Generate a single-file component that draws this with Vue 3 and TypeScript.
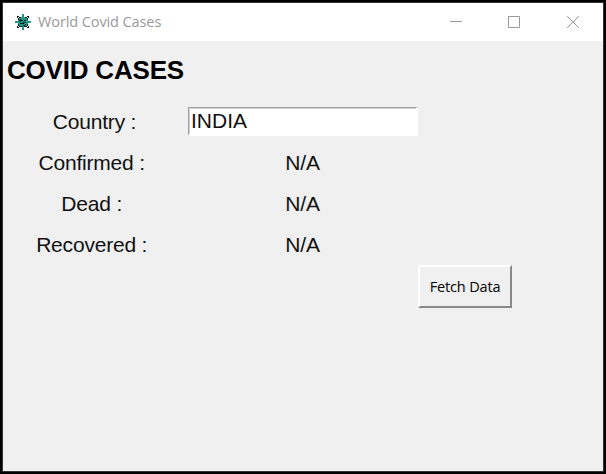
<script setup lang="ts">
import { ref } from 'vue'

const country = ref('INDIA')
const rows = [
  { label: 'Confirmed :', value: 'N/A' },
  { label: 'Dead :', value: 'N/A' },
  { label: 'Recovered :', value: 'N/A' },
]
</script>

<template>
  <div class="window">
    <header class="titlebar">
      <svg class="app-icon" width="16" height="16" viewBox="0 0 16 16" shape-rendering="crispEdges">
        <path fill="#20998b" d="M7 0h2v3H7zM7 13h2v3H7zM0 7h3v2H0zM13 7h3v2h-3zM4 3h8v1h1v8h-1v1H4v-1H3V4h1z" />
        <path fill="#06201e" d="M2 2h2v1H3v1H2zM12 2h2v2h-1V3h-1zM2 12h1v1h1v1H2zM13 12h1v2h-2v-1h1zM4 3h2v1H4zM10 3h2v1h-2zM3 4h1v2H3zM12 4h1v2h-1zM3 10h1v2H3zM12 10h1v2h-1zM4 12h3v1H4zM9 12h3v1H9zM5 5h1v1h2v1H6v1H5V7H4V6h1zM9 6h2v1H9zM6 9h2V8h3v1H9v1H6zM5 9h1v1H5zM8 11h2v-1h1v1h-1v1H8z" />
      </svg>
      <span class="title">World Covid Cases</span>
      <div class="controls">
        <svg width="12" height="12" viewBox="0 0 12 12"><path d="M1 5.5h12" /></svg>
        <svg width="12" height="12" viewBox="0 0 12 12"><path d="M.5.5h11v11H.5z" /></svg>
        <svg width="12" height="12" viewBox="0 0 12 12"><path d="M.2.2l11.6 11.6M11.8.2L.2 11.8" /></svg>
      </div>
    </header>
    <main class="form">
      <h1>COVID CASES</h1>
      <label class="name" for="country">Country :</label>
      <input id="country" v-model="country" type="text" spellcheck="false" />
      <template v-for="row in rows" :key="row.label">
        <span class="name">{{ row.label }}&nbsp;</span>
        <span class="value">{{ row.value }}</span>
      </template>
      <button type="button">Fetch Data</button>
    </main>
  </div>
</template>

<style>
body {
  background: #000;
}
</style>

<style scoped>
.window {
  box-sizing: border-box;
  width: 606px;
  height: 474px;
  padding: 2px;
  background: #000;
  display: flex;
  flex-direction: column;
}
.titlebar {
  box-sizing: border-box;
  height: 39px;
  display: flex;
  align-items: center;
  padding: 0 24px 0 12px;
  background: #fff;
  border: 1px solid #333;
  border-bottom: 0;
}
.app-icon {
  margin-right: 7px;
}
.title {
  font: 14.5px/20px "Open Sans", "Noto Sans", sans-serif;
  letter-spacing: -0.1px;
  color: #999;
  white-space: nowrap;
}
.controls {
  margin-left: auto;
  display: flex;
  gap: 47px;
}
.controls svg {
  overflow: visible;
  fill: none;
  stroke: #999;
  stroke-width: 1;
}
.form {
  box-sizing: border-box;
  flex: 1;
  display: grid;
  grid-template-columns: 185px 230px 94px;
  grid-template-rows: 60px 41px 41px 41px 41px 43px;
  align-items: center;
  background: #f0f0f0;
  border: 1px solid #333;
  border-top: 0;
  font: 21px/24px "Liberation Sans", Arial, sans-serif;
  letter-spacing: -0.2px;
  color: #111;
}
h1 {
  margin: 0;
  grid-column: 1 / -1;
  padding: 0 0 2px 4px;
  font-size: 26px;
  line-height: 30px;
  color: #000;
}
.name,
.value {
  text-align: center;
}
.name {
  grid-column: 1;
  padding-right: 2px;
}
.value {
  padding-right: 1px;
}
input {
  box-sizing: border-box;
  width: 230px;
  height: 29px;
  margin: 0;
  padding: 0 0 0 2px;
  border: 2px solid #fff;
  border-top: 1px solid #a0a0a0;
  border-left: 1px solid #a0a0a0;
  border-radius: 0;
  outline: none;
  background: #fff;
  box-shadow: inset 1px 1px #d0d0d0;
  font: inherit;
  color: #111;
}
button {
  grid-column: 3;
  grid-row: 6;
  box-sizing: border-box;
  width: 94px;
  height: 43px;
  margin: 0;
  padding: 0;
  border: 2px solid;
  border-color: #fff #888 #888 #fff;
  border-radius: 0;
  background: #f0f0f0;
  font: 14.5px/20px "Open Sans", "Noto Sans", sans-serif;
  letter-spacing: -0.15px;
  color: #000;
}
</style>
